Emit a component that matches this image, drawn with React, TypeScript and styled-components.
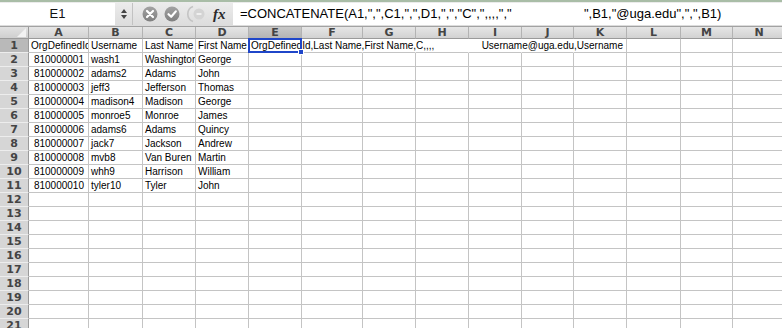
import React from 'react';
import styled, { createGlobalStyle } from 'styled-components';

const GlobalStyle = createGlobalStyle`
  html, body {
    margin: 0;
    padding: 0;
    background: #ffffff;
    overflow: hidden;
  }
`;

const COLUMNS: Array<{ key: string; width: number }> = [
  { key: 'A', width: 60 },
  { key: 'B', width: 54 },
  { key: 'C', width: 53 },
  { key: 'D', width: 53 },
  { key: 'E', width: 53 },
  { key: 'F', width: 61 },
  { key: 'G', width: 53 },
  { key: 'H', width: 53 },
  { key: 'I', width: 53 },
  { key: 'J', width: 52 },
  { key: 'K', width: 53 },
  { key: 'L', width: 54 },
  { key: 'M', width: 52 },
  { key: 'N', width: 53 },
];

const PEOPLE: Array<[string, string, string, string]> = [
  ['810000001', 'wash1', 'Washington', 'George'],
  ['810000002', 'adams2', 'Adams', 'John'],
  ['810000003', 'jeff3', 'Jefferson', 'Thomas'],
  ['810000004', 'madison4', 'Madison', 'George'],
  ['810000005', 'monroe5', 'Monroe', 'James'],
  ['810000006', 'adams6', 'Adams', 'Quincy'],
  ['810000007', 'jack7', 'Jackson', 'Andrew'],
  ['810000008', 'mvb8', 'Van Buren', 'Martin'],
  ['810000009', 'whh9', 'Harrison', 'William'],
  ['810000010', 'tyler10', 'Tyler', 'John'],
];

const FORMULA =
  '=CONCATENATE(A1,",",C1,",",D1,",","C",",,,,","                    ",B1,"@uga.edu",",",B1)';
const E1_TEXT = 'OrgDefinedId,Last Name,First Name,C,,,,                 Username@uga.edu,Username';

const ROW_COUNT = 21;

const App: React.FC = () => {
  const renderRow = (row: number) => {
    const cells: React.ReactNode[] = [];
    const person = row >= 2 && row <= 11 ? PEOPLE[row - 2] : null;
    COLUMNS.forEach((col, index) => {
      const id = `${col.key}${row}`;
      if (row === 1) {
        if (col.key === 'E') {
          cells.push(
            <Cell key={id} $open>
              {E1_TEXT}
              <Selection />
            </Cell>,
          );
          return;
        }
        const header = ['OrgDefinedId', 'Username', 'Last Name', 'First Name'][index];
        const open = index >= 5 && index <= 9;
        cells.push(
          <Cell key={id} $open={open}>
            {header}
          </Cell>,
        );
        return;
      }
      if (person && index < 4) {
        cells.push(
          <Cell key={id} $right={index === 0}>
            {person[index]}
          </Cell>,
        );
        return;
      }
      cells.push(<Cell key={id} />);
    });
    return (
      <React.Fragment key={row}>
        <RowHead $active={row === 1}>{row}</RowHead>
        {cells}
      </React.Fragment>
    );
  };

  return (
    <>
      <GlobalStyle />
      <Window>
        <FormulaBar>
          <NameBox>E1</NameBox>
          <Stepper>
            <svg width="8" height="14" viewBox="0 0 8 14">
              <path d="M4 2 L7 6 H1 Z" fill="#444" />
              <path d="M4 12 L7 8 H1 Z" fill="#444" />
            </svg>
          </Stepper>
          <Tools>
            <svg width="84" height="20" viewBox="0 0 84 20">
              <defs>
                <linearGradient id="btn" x1="0" y1="0" x2="0" y2="1">
                  <stop offset="0" stopColor="#a3a3a3" />
                  <stop offset="1" stopColor="#7f7f7f" />
                </linearGradient>
              </defs>
              <circle cx="17" cy="10" r="7.5" fill="url(#btn)" />
              <path d="M14 7 L20 13 M20 7 L14 13" stroke="#fff" strokeWidth="2.2" strokeLinecap="round" />
              <circle cx="39" cy="10" r="7.5" fill="url(#btn)" />
              <path d="M35.5 10.2 L38.2 12.8 L42.8 7.4" stroke="#fff" strokeWidth="2.2" fill="none" strokeLinecap="round" strokeLinejoin="round" />
              <path d="M60 2.5 A8 8 0 0 0 60 17.5" stroke="#c4c4c4" strokeWidth="1.6" fill="none" />
              <circle cx="66" cy="10" r="5.5" fill="#d4d4d4" />
              <path d="M63.5 10 H68.5" stroke="#f5f5f5" strokeWidth="1.6" />
            </svg>
            <Fx>fx</Fx>
          </Tools>
          <FormulaInput>{FORMULA}</FormulaInput>
        </FormulaBar>
        <Sheet>
          <Corner>
            <svg width="10" height="10" viewBox="0 0 10 10">
              <path d="M10 1 V10 H1 Z" fill="#f2f2f2" />
            </svg>
          </Corner>
          {COLUMNS.map((col) => (
            <ColHead key={col.key} $active={col.key === 'E'}>
              {col.key}
            </ColHead>
          ))}
          {Array.from({ length: ROW_COUNT }, (_, i) => renderRow(i + 1))}
        </Sheet>
      </Window>
    </>
  );
};

const Window = styled.div`
  width: 782px;
  height: 328px;
  overflow: hidden;
  background: #ffffff;
`;

const FormulaBar = styled.div`
  display: flex;
  align-items: center;
  height: 27px;
  box-sizing: border-box;
  border-top: 2px solid #a9bda7;
  border-bottom: 1px solid #a2a2a2;
  background: linear-gradient(#ececec, #dcdcdc);
`;

const NameBox = styled.div`
  width: 115px;
  height: 22px;
  background: #ffffff;
  font-family: 'Liberation Sans', Arial, sans-serif;
  font-size: 13px;
  line-height: 22px;
  text-align: center;
  color: #111;
`;

const Stepper = styled.div`
  display: flex;
  align-items: center;
  justify-content: center;
  width: 17px;
  height: 22px;
  border-right: 1px solid #c2c2c2;
`;

const Tools = styled.div`
  display: flex;
  align-items: center;
  width: 100px;
  height: 22px;
`;

const Fx = styled.span`
  margin-left: -4px;
  font-family: 'Liberation Serif', 'Times New Roman', serif;
  font-style: italic;
  font-weight: bold;
  font-size: 15px;
  color: #2a2a2a;
`;

const FormulaInput = styled.div`
  flex: 1;
  height: 22px;
  padding-left: 7px;
  background: #ffffff;
  font-family: 'Liberation Sans', Arial, sans-serif;
  font-size: 13px;
  line-height: 22px;
  color: #000;
  white-space: pre;
  overflow: hidden;
`;

const Sheet = styled.div`
  display: grid;
  grid-template-columns: 29px ${COLUMNS.map((c) => `${c.width}px`).join(' ')};
  grid-template-rows: 12px;
  grid-auto-rows: 14px;
`;

const Corner = styled.div`
  display: flex;
  align-items: flex-end;
  justify-content: flex-end;
  padding: 0 2px 1px 0;
  box-sizing: border-box;
  background: linear-gradient(#e2e2e2, #cfcfcf);
  border-right: 1px solid #9a9a9a;
  border-bottom: 1px solid #9a9a9a;
`;

const ColHead = styled.div<{ $active?: boolean }>`
  box-sizing: border-box;
  background: ${({ $active }) =>
    $active ? 'linear-gradient(#c9c9c9, #b4b4b4)' : 'linear-gradient(#e6e6e6, #d2d2d2)'};
  border-right: 1px solid #b3b3b3;
  border-bottom: 1px solid #9a9a9a;
  font-family: 'DejaVu Sans', 'Liberation Sans', sans-serif;
  font-weight: bold;
  font-size: 11px;
  line-height: 12px;
  text-align: center;
  color: #444;
`;

const RowHead = styled.div<{ $active?: boolean }>`
  box-sizing: border-box;
  background: ${({ $active }) => ($active ? '#b9b9b9' : '#d6d6d6')};
  border-right: 1px solid #9a9a9a;
  border-bottom: 1px solid #ededed;
  font-family: 'DejaVu Sans', 'Liberation Sans', sans-serif;
  font-weight: bold;
  font-size: 11px;
  line-height: 13px;
  text-align: center;
  color: #444;
`;

const Cell = styled.div<{ $right?: boolean; $open?: boolean }>`
  position: relative;
  box-sizing: border-box;
  padding: 0 ${({ $right }) => ($right ? '4px' : '2px')};
  border-right: 1px solid ${({ $open }) => ($open ? 'transparent' : '#c4c4c4')};
  border-bottom: 1px solid #c4c4c4;
  font-family: 'Liberation Sans', Arial, sans-serif;
  font-size: 10px;
  line-height: 14px;
  color: #000;
  text-align: ${({ $right }) => ($right ? 'right' : 'left')};
  white-space: pre;
  overflow: ${({ $open }) => ($open ? 'visible' : 'hidden')};
`;

const Selection = styled.span`
  position: absolute;
  top: -1px;
  left: -1px;
  right: -1px;
  bottom: -1px;
  border: 2px solid #1f46c9;
  z-index: 2;

  &::after {
    content: '';
    position: absolute;
    right: -4px;
    bottom: -4px;
    width: 4px;
    height: 4px;
    background: #1f46c9;
    border: 1px solid #ffffff;
  }
`;

export default App;
